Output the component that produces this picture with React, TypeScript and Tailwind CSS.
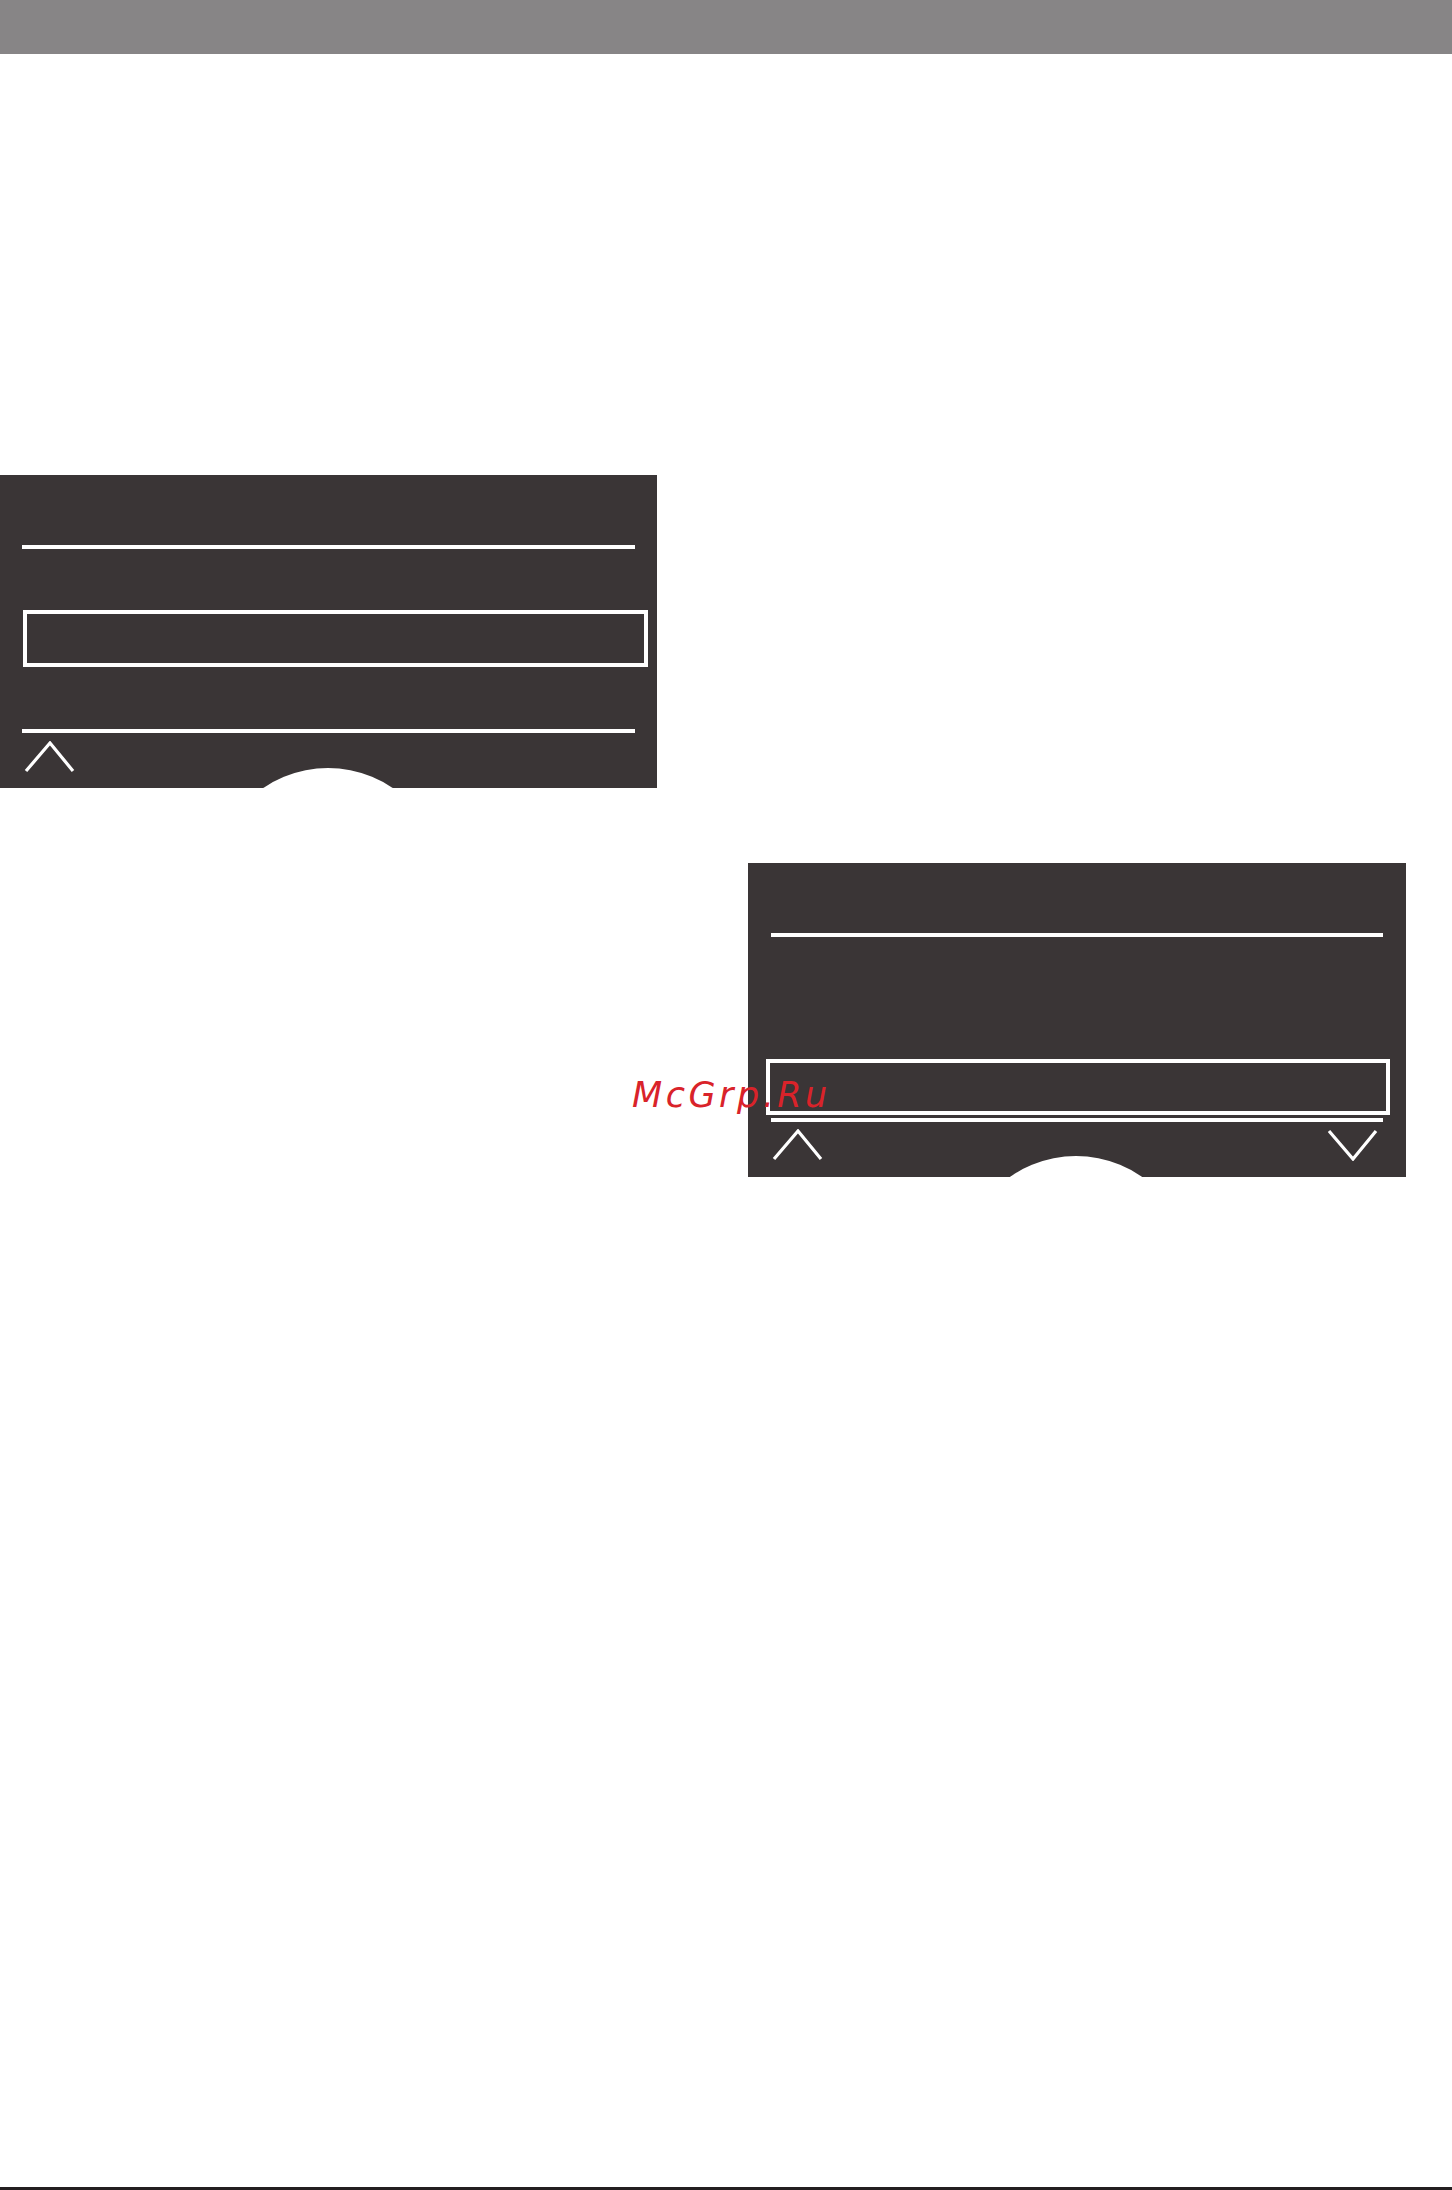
import React from "react";

function Chevron({ dir }: { dir: "up" | "down" }) {
  return (
    <svg width="52" height="32" viewBox="0 0 52 32" fill="none" aria-hidden>
      <path
        d={dir === "up" ? "M2 30 L26 2 L49 30" : "M2 2 L26 30 L49 2"}
        stroke="white"
        strokeWidth="3.2"
        strokeLinecap="butt"
      />
    </svg>
  );
}

function Rule({ className = "" }: { className?: string }) {
  return <div className={`h-1 bg-white ${className}`} />;
}

function Knob() {
  return (
    <div
      aria-hidden
      className="absolute left-[213px] top-[293px] h-[230px] w-[230px] rounded-full bg-white"
    />
  );
}

function MenuOne() {
  return (
    <div className="relative h-[313px] w-[657px] overflow-hidden bg-[#3a3536] pt-[70px]">
      <Rule className="mx-[22px]" />
      <div className="ml-[23px] mt-[61px] h-[57px] w-[625px] border-4 border-white" />
      <Rule className="mx-[22px] mt-[62px]" />
      <div className="mt-[8px] flex px-[24px]">
        <Chevron dir="up" />
      </div>
      <Knob />
    </div>
  );
}

function MenuTwo() {
  return (
    <div className="relative h-[314px] w-[658px] overflow-hidden bg-[#3a3536] pt-[70px]">
      <Rule className="mx-[23px]" />
      <div className="ml-[18px] mt-[122px] h-[56px] w-[624px] border-4 border-white" />
      <Rule className="mx-[23px] mt-[3px]" />
      <div className="mt-[7px] flex justify-between pl-[24px] pr-[27px]">
        <Chevron dir="up" />
        <Chevron dir="down" />
      </div>
      <Knob />
    </div>
  );
}

export default function App() {
  return (
    <div className="relative flex h-[2190px] w-[1452px] flex-col bg-white font-['DejaVu_Sans',sans-serif]">
      <header className="h-[54px] bg-[#878586]" />

      <section className="mt-[421px]">
        <MenuOne />
      </section>

      <section className="ml-[748px] mt-[75px]">
        <MenuTwo />
      </section>

      <span className="absolute left-[632px] top-[1078px] text-[35px] italic leading-none tracking-[3.5px] text-[#d9232a]">
        McGrp.Ru
      </span>

      <div className="mt-auto h-[3px] bg-[#231f20]" />
    </div>
  );
}
